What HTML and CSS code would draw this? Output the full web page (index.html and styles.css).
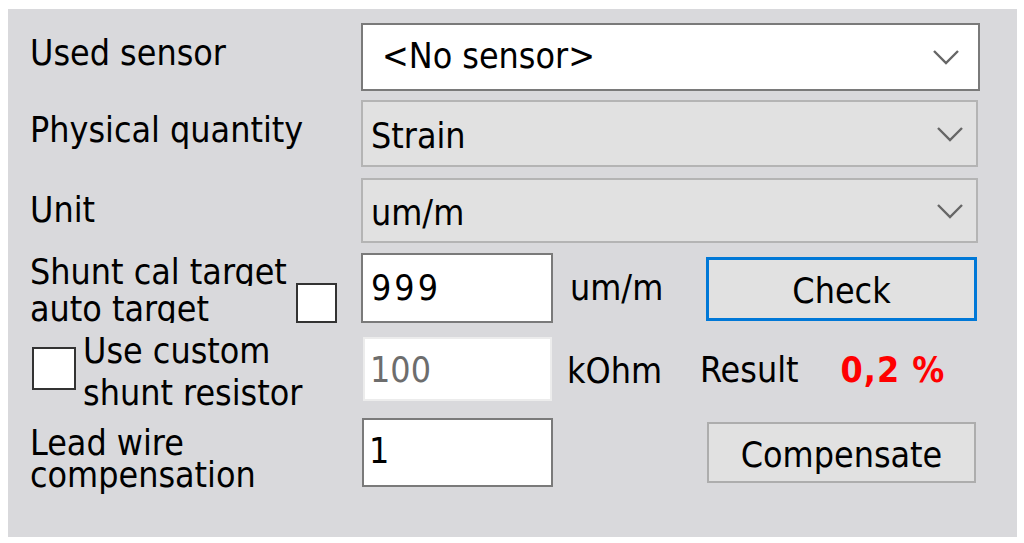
FILE: index.html
```html
<!DOCTYPE html>
<html>
<head>
<meta charset="utf-8">
<link rel="stylesheet" href="styles.css">
</head>
<body>
<div class="panel">
  <div class="label l1">Used sensor</div>
  <div class="combo combo-white">
    <span class="combo-text t1">&lt;No sensor&gt;</span>
    <svg class="chev" width="28" height="16" viewBox="0 0 28 16"><polyline points="2,2 14,14 26,2" fill="none" stroke="#666" stroke-width="2.4"/></svg>
  </div>

  <div class="label l2">Physical quantity</div>
  <div class="combo combo-gray">
    <span class="combo-text t2">Strain</span>
    <svg class="chev" width="28" height="16" viewBox="0 0 28 16"><polyline points="2,2 14,14 26,2" fill="none" stroke="#666" stroke-width="2.4"/></svg>
  </div>

  <div class="label l3">Unit</div>
  <div class="combo combo-gray c3">
    <span class="combo-text t3">um/m</span>
    <svg class="chev" width="28" height="16" viewBox="0 0 28 16"><polyline points="2,2 14,14 26,2" fill="none" stroke="#666" stroke-width="2.4"/></svg>
  </div>

  <div class="cell-l4">
    <div class="label l4">
      <span class="clip first">Shunt cal target</span>
      <span class="clip">auto target</span>
    </div>
    <div class="check check4"></div>
  </div>
  <div class="field f4">999</div>
  <div class="unit u4">um/m</div>
  <div class="btn btn-focus">Check</div>

  <div class="cell-l5">
    <div class="check check5"></div>
    <div class="label l5">Use custom<br>shunt resistor</div>
  </div>
  <div class="field field-disabled f5">100</div>
  <div class="unit u5">kOhm</div>
  <div class="result">
    <span>Result</span>
    <span class="value">0,2 %</span>
  </div>

  <div class="label l6">Lead wire<br>compensation</div>
  <div class="field f6">1</div>
  <div class="btn btn-comp">Compensate</div>
</div>
</body>
</html>
```

FILE: styles.css
```css
html, body {
  margin: 0;
  padding: 0;
  background: #ffffff;
}

body {
  font-family: "DejaVu Sans Condensed", "DejaVu Sans", sans-serif;
  font-stretch: condensed;
  font-size: 35.5px;
  line-height: 40px;
  color: #000;
}

.panel {
  box-sizing: border-box;
  margin: 9px 7px 6px 8px;
  height: 528px;
  background: #d9d9dc;
  padding: 14px 0 0 22px;
  display: grid;
  grid-template-columns: 331px 192px 153px 273px;
  grid-template-rows: 77px 78px 75px 84px 81px 70px;
  align-items: start;
}

.label {
  white-space: nowrap;
}

.l1 { margin-top: 10px; }
.l2 { margin-top: 10px; }
.l3 { margin-top: 12px; }

/* combo boxes */
.combo {
  grid-column: span 3;
  box-sizing: border-box;
  display: flex;
  justify-content: space-between;
  align-items: flex-start;
}

.combo-white {
  width: 619px;
  height: 68px;
  background: #ffffff;
  border: 2px solid #7a7a7a;
}

.combo-gray {
  width: 617px;
  height: 67px;
  background: #e1e1e1;
  border: 2px solid #b4b4b4;
}

.c3 { height: 65px; }

.combo-text { white-space: nowrap; }
.t1 { padding: 11px 0 0 19px; }
.t2 { padding: 14px 0 0 8px; }
.t3 { padding: 13px 0 0 8px; }

.chev {
  align-self: center;
  margin-right: 18px;
}
.combo-gray .chev { margin-right: 12px; }

/* row 4 */
.cell-l4 {
  display: flex;
  align-items: flex-start;
}

.l4 {
  line-height: 37px;
}

.clip {
  display: block;
  height: 33px;
  overflow: hidden;
}
.clip.first { margin-bottom: 4px; }

.check {
  box-sizing: border-box;
  background: #ffffff;
  border: 2px solid #333333;
}

.check4 {
  width: 41px;
  height: 40px;
  margin-top: 30px;
  margin-left: auto;
  margin-right: 24px;
  flex: none;
}

/* fields */
.field {
  box-sizing: border-box;
  background: #ffffff;
  border: 2px solid #7a7a7a;
  white-space: nowrap;
}

.f4 {
  width: 192px;
  height: 70px;
  padding: 13px 0 0 8px;
  letter-spacing: 3px;
}

.field-disabled {
  border-color: #ececec;
  color: #6d6d6d;
}

.f5 {
  margin-left: 2px;
  width: 189px;
  height: 64px;
  padding: 11px 0 0 5px;
}

.f6 {
  margin-left: 1px;
  width: 191px;
  height: 69px;
  padding: 11px 0 0 5px;
}

.unit { white-space: nowrap; }
.u4 { margin-top: 15px; padding-left: 17px; }
.u5 { margin-top: 14px; padding-left: 14px; }

/* buttons */
.btn {
  box-sizing: border-box;
  background: #e1e1e1;
  text-align: center;
  white-space: nowrap;
}

.btn-focus {
  width: 271px;
  height: 64px;
  margin-top: 4px;
  border: 3px solid #0078d7;
  padding-top: 11px;
}

.btn-comp {
  grid-column: 4;
  width: 269px;
  height: 61px;
  margin-top: 4px;
  margin-left: 1px;
  border: 2px solid #adadad;
  padding-top: 11px;
}

/* row 5 */
.cell-l5 {
  display: flex;
  align-items: flex-start;
}

.check5 {
  width: 44px;
  height: 43px;
  margin-left: 2px;
  margin-top: 10px;
  flex: none;
}

.l5 {
  line-height: 42px;
  margin-top: -7px;
  margin-left: 7px;
}

.result {
  display: flex;
  gap: 42px;
  margin-top: 13px;
  margin-left: -6px;
  white-space: nowrap;
}

.value {
  color: #ff0000;
  font-weight: bold;
  letter-spacing: 1px;
}

/* row 6 */
.l6 {
  line-height: 32px;
  margin-top: 9px;
}
```
